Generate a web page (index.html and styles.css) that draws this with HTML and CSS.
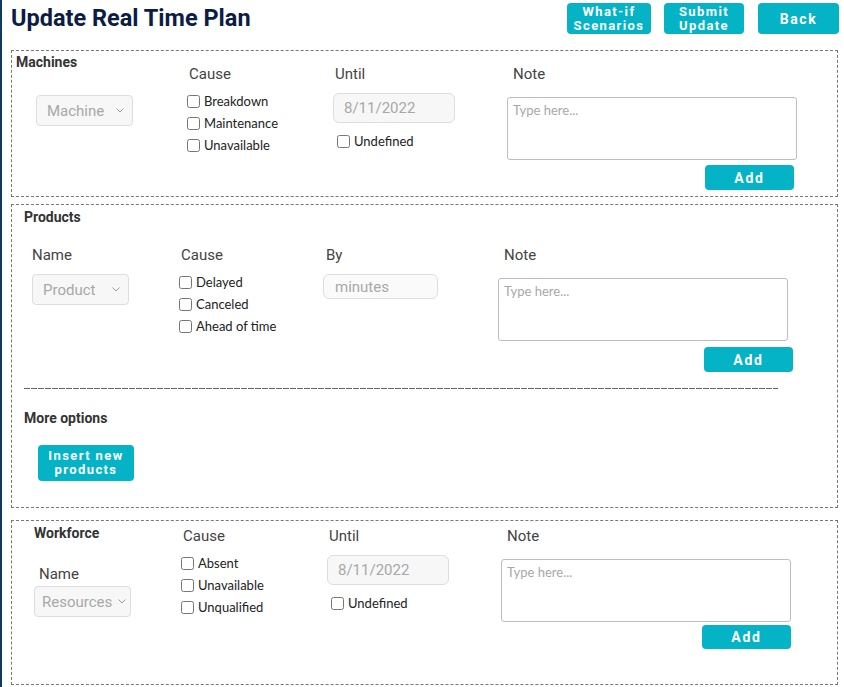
FILE: index.html
```html
<!DOCTYPE html>
<html lang="en">
<head>
<meta charset="utf-8">
<title>Update Real Time Plan</title>
<link rel="stylesheet" href="styles.css">
</head>
<body>
<div class="page">
  <header class="topbar">
    <h1 class="title">Update Real Time Plan</h1>
    <div class="actions">
      <button class="btn btn-top btn-whatif">What-if<br>Scenarios</button>
      <button class="btn btn-top btn-submit">Submit<br>Update</button>
      <button class="btn btn-top btn-back">Back</button>
    </div>
  </header>

  <section class="panel panel-machines">
    <h3 class="panel-title">Machines</h3>
    <div class="fields">
      <div class="col col-name">
        <div class="select select-machine"><span>Machine</span><svg class="chev" width="8" height="5" viewBox="0 0 8 5"><path d="M0.5 0.5 L4 4 L7.5 0.5" fill="none" stroke="#999" stroke-width="1"/></svg></div>
      </div>
      <div class="col col-cause">
        <div class="label">Cause</div>
        <div class="checks">
          <label class="check"><input type="checkbox"><span>Breakdown</span></label>
          <label class="check"><input type="checkbox"><span>Maintenance</span></label>
          <label class="check"><input type="checkbox"><span>Unavailable</span></label>
        </div>
      </div>
      <div class="col col-when">
        <div class="label">Until</div>
        <div class="input input-date">8/11/2022</div>
        <label class="check check-undef"><input type="checkbox"><span>Undefined</span></label>
      </div>
      <div class="col col-note">
        <div class="label label-note">Note</div>
        <textarea class="note" placeholder="Type here..."></textarea>
        <button class="btn btn-add">Add</button>
      </div>
    </div>
  </section>

  <section class="panel panel-products">
    <h3 class="panel-title">Products</h3>
    <div class="fields">
      <div class="col col-name">
        <div class="label label-name">Name</div>
        <div class="select select-product"><span>Product</span><svg class="chev" width="8" height="5" viewBox="0 0 8 5"><path d="M0.5 0.5 L4 4 L7.5 0.5" fill="none" stroke="#999" stroke-width="1"/></svg></div>
      </div>
      <div class="col col-cause">
        <div class="label">Cause</div>
        <div class="checks">
          <label class="check"><input type="checkbox"><span>Delayed</span></label>
          <label class="check"><input type="checkbox"><span>Canceled</span></label>
          <label class="check"><input type="checkbox"><span>Ahead of time</span></label>
        </div>
      </div>
      <div class="col col-when">
        <div class="label label-by">By</div>
        <div class="input input-minutes">minutes</div>
      </div>
      <div class="col col-note">
        <div class="label label-note">Note</div>
        <textarea class="note" placeholder="Type here..."></textarea>
        <button class="btn btn-add">Add</button>
      </div>
    </div>
    <div class="separator"></div>
    <h3 class="panel-title more-title">More options</h3>
    <button class="btn btn-insert">Insert new<br>products</button>
  </section>

  <section class="panel panel-workforce">
    <div class="fields">
      <div class="col col-name">
        <h3 class="panel-title workforce-title">Workforce</h3>
        <div class="label label-name">Name</div>
        <div class="select select-resources"><span>Resources</span><svg class="chev" width="8" height="5" viewBox="0 0 8 5"><path d="M0.5 0.5 L4 4 L7.5 0.5" fill="none" stroke="#999" stroke-width="1"/></svg></div>
      </div>
      <div class="col col-cause">
        <div class="label">Cause</div>
        <div class="checks">
          <label class="check"><input type="checkbox"><span>Absent</span></label>
          <label class="check"><input type="checkbox"><span>Unavailable</span></label>
          <label class="check"><input type="checkbox"><span>Unqualified</span></label>
        </div>
      </div>
      <div class="col col-when">
        <div class="label">Until</div>
        <div class="input input-date">8/11/2022</div>
        <label class="check check-undef"><input type="checkbox"><span>Undefined</span></label>
      </div>
      <div class="col col-note">
        <div class="label label-note">Note</div>
        <textarea class="note" placeholder="Type here..."></textarea>
        <button class="btn btn-add">Add</button>
      </div>
    </div>
  </section>
</div>
</body>
</html>
```

FILE: styles.css
```css
* { box-sizing: border-box; }

html, body {
  margin: 0;
  padding: 0;
  background: #ffffff;
}

body {
  font-family: Roboto, "Liberation Sans", sans-serif;
  color: #333;
}

.page {
  min-height: 687px;
  border-left: 2px solid #0e3a5f;
  padding: 0 5px 0 9px;
}

/* ---------- header ---------- */
.topbar {
  display: flex;
  justify-content: space-between;
  align-items: flex-start;
  height: 50px;
  padding-top: 3px;
}

.title {
  margin: 1px 0 0 0;
  font-size: 23.5px;
  line-height: 28px;
  font-weight: 700;
  color: #0b1c45;
}

.actions {
  display: flex;
  gap: 13px;
}

.btn {
  border: none;
  background: #04b3c6;
  color: #ffffff;
  font-family: Roboto, "Liberation Sans", sans-serif;
  font-weight: 700;
  cursor: pointer;
  border-radius: 4px;
  padding: 0;
}

.btn-top {
  height: 31px;
  font-size: 13px;
  line-height: 14px;
  letter-spacing: 1.4px;
}

.btn-whatif { width: 84px; }
.btn-submit { width: 80px; }
.btn-back { width: 81px; margin-left: 1px; font-size: 14px; letter-spacing: 1.6px; }

/* ---------- panels ---------- */
.panel {
  width: 827px;
  border: 1px dashed #777;
}

.panel-title {
  margin: 0;
  font-size: 14px;
  line-height: 16px;
  font-weight: 700;
  color: #333;
}

.fields {
  display: flex;
  align-items: flex-start;
}

.col {
  display: flex;
  flex-direction: column;
  align-items: flex-start;
}

.label {
  font-size: 15px;
  line-height: 18px;
  color: #444;
  padding-left: 2px;
}

.label-note { padding-left: 6px; }
.label-name { padding-left: 0; }

.checks {
  display: flex;
  flex-direction: column;
  margin-top: 7px;
}

.check {
  display: flex;
  align-items: center;
  height: 22px;
  font-family: Lato, "Liberation Sans", sans-serif;
  font-size: 13px;
  color: #222;
}

.check input {
  width: 13px;
  height: 13px;
  margin: 0 4px 0 0;
}

.check-undef {
  margin-top: 7px;
  padding-left: 4px;
}

.select {
  display: flex;
  align-items: center;
  justify-content: space-between;
  width: 97px;
  height: 31px;
  padding: 0 8px 0 10px;
  background: #f7f7f7;
  border: 1px solid #dedede;
  border-radius: 4px;
  font-size: 15px;
  color: #a8a8a8;
  white-space: nowrap;
  overflow: hidden;
}

.select-resources { padding-left: 7px; padding-right: 4px; }
.select-resources span { overflow: hidden; }

.chev { flex: none; }

.input {
  display: flex;
  align-items: center;
  background: #f7f7f7;
  border: 1px solid #dedede;
  border-radius: 6px;
  font-size: 15px;
  color: #a8a8a8;
}

.input-date {
  width: 122px;
  height: 30px;
  margin-top: 10px;
  padding-left: 10px;
}

.input-minutes {
  width: 115px;
  height: 25px;
  margin-top: 10px;
  padding-left: 11px;
  background: #fafafa;
}

.note {
  display: block;
  width: 290px;
  height: 63px;
  margin-top: 14px;
  border: 1px solid #bdbdbd;
  border-radius: 3px;
  padding: 4px 5px;
  font-family: Lato, "Liberation Sans", sans-serif;
  font-size: 13px;
  resize: none;
  background: #fff;
}

.note::placeholder { color: #a8a8a8; }

.btn-add {
  align-self: flex-end;
  width: 89px;
  height: 25px;
  margin-top: 5px;
  font-size: 14px;
  letter-spacing: 1.8px;
}

/* ---------- machines ---------- */
.panel-machines {
  padding: 3px 0 6px 4px;
}

.panel-machines .fields {
  margin: -5px 0 0 20px;
}

.panel-machines .col-name { width: 151px; padding-top: 30px; }
.panel-machines .col-cause { width: 146px; }
.panel-machines .col-when { width: 174px; }
.panel-machines .btn-add { margin-right: 3px; }

/* ---------- products ---------- */
.panel-products {
  margin-top: 7px;
  padding: 4px 0 26px 12px;
}

.panel-products .fields {
  margin: 21px 0 0 8px;
}

.panel-products .col-name { width: 147px; }
.panel-products .select { margin-top: 10px; }
.panel-products .col-cause { width: 144px; }
.panel-products .col-when { width: 175px; }
.label-by { padding-left: 3px; }
.panel-products .btn-add { margin-top: 6px; margin-right: -5px; }

.separator {
  width: 754px;
  height: 1px;
  margin-top: 16px;
  background: repeating-linear-gradient(90deg, #666 0 6px, transparent 6px 7px);
}

.more-title {
  margin-top: 21px;
}

.btn-insert {
  display: block;
  width: 96px;
  height: 36px;
  margin: 19px 0 0 14px;
  font-size: 13px;
  line-height: 14px;
  letter-spacing: 1.4px;
}

/* ---------- workforce ---------- */
.panel-workforce {
  margin-top: 12px;
  padding: 6px 0 35px 0;
}

.panel-workforce .fields {
  margin-left: 22px;
}

.workforce-title { margin-top: -2px; }

.panel-workforce .col-name { width: 147px; }
.panel-workforce .label-name { margin-top: 24px; padding-left: 5px; }
.panel-workforce .select { margin-top: 3px; }
.panel-workforce .col-cause { width: 146px; }
.panel-workforce .col-when { width: 174px; }
.panel-workforce .btn-add { margin-top: 3px; height: 24px; }
```
